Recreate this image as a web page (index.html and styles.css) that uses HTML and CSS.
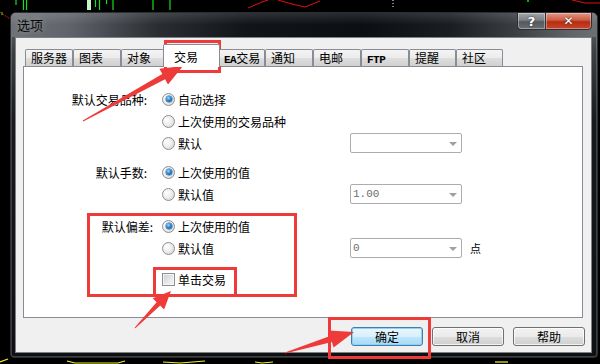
FILE: index.html
```html
<!DOCTYPE html>
<html lang="zh-CN">
<head>
<meta charset="utf-8">
<title>选项</title>
<link rel="stylesheet" href="styles.css">
</head>
<body>
<div class="desktop">
  <svg class="chart" width="600" height="364" viewBox="0 0 600 364">
    <g stroke="#18e018" stroke-width="1.2">
      <line x1="16" y1="0" x2="16" y2="5"/>
      <line x1="23.5" y1="0" x2="23.5" y2="10"/>
      <line x1="26.5" y1="0" x2="26.5" y2="10"/>
      <line x1="95.5" y1="0" x2="95.5" y2="7"/>
      <line x1="99.5" y1="0" x2="99.5" y2="10"/>
      <line x1="106.5" y1="0" x2="106.5" y2="4"/>
      <line x1="113" y1="0" x2="113" y2="10"/>
      <line x1="153" y1="0" x2="153" y2="10"/>
      <line x1="170" y1="0" x2="170" y2="10"/>
      <line x1="2" y1="12" x2="2" y2="15"/>
    </g>
    <rect x="87" y="0" width="4" height="10" fill="#c8f5c8"/>
    <circle cx="528" cy="1" r="1" fill="#18e018"/>
    <g stroke="#e01010" stroke-width="1" fill="none">
      <polyline points="0,12 10,19" stroke-dasharray="2 1"/>
      <polyline points="248,8 262,2 268,0"/>
      <polyline points="278,0 292,4 305,7 315,3 320,1"/>
      <polyline points="572,0 585,3 600,3"/>
    </g>
    <line x1="393" y1="0" x2="393" y2="8" stroke="#fff" stroke-dasharray="1 2"/>
    <g stroke="#f0f020" stroke-width="1.2" fill="none">
      <polyline points="0,362 8,359"/>
      <polyline points="67,361 75,363 118,363 125,361"/>
      <polyline points="163,362 180,363 205,361"/>
      <polyline points="255,362 262,363 273,362"/>
      <polyline points="495,362 508,362"/>
    </g>
  </svg>

  <div class="window">
    <div class="titlebar">
      <span class="title">选项</span>
      <div class="caption-buttons">
        <span class="cap-btn help">?</span>
        <span class="cap-btn close">✕</span>
      </div>
    </div>
    <div class="client">
      <div class="tabs">
        <span class="tab">服务器</span>
        <span class="tab">图表</span>
        <span class="tab tab-narrow">对象</span>
        <span class="tab tab-selected">交易</span>
        <span class="tab tab-47"><span class="latin">EA</span>交易</span>
        <span class="tab">通知</span>
        <span class="tab">电邮</span>
        <span class="tab"><span class="latin">FTP</span></span>
        <span class="tab tab-47">提醒</span>
        <span class="tab tab-47">社区</span>
      </div>
      <div class="panel">
        <div class="group">
          <div class="row">
            <span class="label">默认交易品种:</span>
            <span class="opt"><span class="radio on"></span>自动选择</span>
          </div>
          <div class="row">
            <span class="label"></span>
            <span class="opt"><span class="radio"></span>上次使用的交易品种</span>
          </div>
          <div class="row">
            <span class="label"></span>
            <span class="opt"><span class="radio"></span>默认</span>
            <span class="combo"><span class="combo-text"></span><span class="combo-arrow"></span></span>
          </div>
        </div>
        <div class="group group-lots">
          <div class="row">
            <span class="label">默认手数:</span>
            <span class="opt"><span class="radio on"></span>上次使用的值</span>
          </div>
          <div class="row">
            <span class="label"></span>
            <span class="opt"><span class="radio"></span>默认值</span>
            <span class="combo"><span class="combo-text">1.00</span><span class="combo-arrow"></span></span>
          </div>
        </div>
        <div class="group group-slip">
          <div class="row">
            <span class="label label-shift">默认偏差:</span>
            <span class="opt"><span class="radio on"></span>上次使用的值</span>
          </div>
          <div class="row">
            <span class="label"></span>
            <span class="opt"><span class="radio"></span>默认值</span>
            <span class="combo"><span class="combo-text">0</span><span class="combo-arrow"></span></span>
            <span class="suffix">点</span>
          </div>
        </div>
        <div class="group group-check">
          <div class="row">
            <span class="label"></span>
            <span class="opt"><span class="checkbox"></span>单击交易</span>
          </div>
        </div>
      </div>
      <div class="buttons">
        <span class="btn btn-default">确定</span>
        <span class="btn">取消</span>
        <span class="btn">帮助</span>
      </div>
    </div>
  </div>

  <svg class="annot" width="600" height="364" viewBox="0 0 600 364">
    <g fill="none" stroke="#ef3a3a" stroke-width="3">
      <rect x="165.5" y="41.5" width="54" height="30"/>
      <rect x="88.5" y="214.5" width="207" height="81"/>
      <rect x="154.5" y="268.5" width="81" height="27"/>
      <rect x="329.5" y="318.5" width="100" height="39"/>
    </g>
    <g fill="#ef3a3a">
      <polygon points="82.8,120.6 162.3,74.0 159.4,68.7 183,66 168.0,84.5 165.1,79.2 83.2,121.4"/>
      <polygon points="134.6,327.7 156.6,302.2 152.7,298.3 171,291 164.1,309.5 160.2,305.6 135.4,328.3"/>
      <polygon points="284.9,352.5 330.1,336.1 328.4,330.4 354,332 333.6,347.6 331.9,341.9 285.1,353.5"/>
    </g>
  </svg>
</div>
</body>
</html>
```
FILE: styles.css
```css
* { box-sizing: border-box; }

html, body {
  margin: 0;
  padding: 0;
  background: #000;
}

body {
  width: 600px;
  height: 364px;
  overflow: hidden;
  font-family: "Noto Sans CJK SC", "Noto Sans", sans-serif;
  font-size: 12px;
  color: #000;
}

.desktop {
  position: relative;
  width: 600px;
  height: 364px;
  padding: 12px 2px 0 10px;
  background: #000;
}

.chart, .annot {
  position: absolute;
  left: 0;
  top: 0;
}

.annot { pointer-events: none; }

.window {
  position: relative;
  width: 588px;
  height: 346px;
  display: flex;
  flex-direction: column;
  border: 1px solid #2b2e33;
  border-radius: 6px 6px 4px 4px;
  background: linear-gradient(180deg, #6a6e73 0, #3b3f44 40px, #17191c 110px, #0e1012 100%);
  box-shadow: inset 0 1px 0 rgba(255,255,255,0.45), inset 1px 0 0 rgba(255,255,255,0.18), inset -1px 0 0 rgba(255,255,255,0.18), inset 0 -1px 0 rgba(255,255,255,0.2);
}

.titlebar {
  height: 24px;
  display: flex;
  align-items: flex-start;
  border-radius: 5px 5px 0 0;
  background:
    linear-gradient(180deg, rgba(255,255,255,0.12) 0, rgba(255,255,255,0) 12px),
    linear-gradient(90deg, #6f7378 0, #60646a 10%, #2a2e33 25%, #11151a 40%, #0b0e13 60%, #1a1e23 75%, #3a3e43 86%, #5f6368 95%, #6c7075 100%);
}

.title {
  padding: 4px 0 0 6px;
  font-size: 13px;
  line-height: 16px;
  color: #0a0a0a;
  text-shadow: 0 0 6px rgba(255,255,255,0.35);
}

.caption-buttons {
  display: flex;
  margin: -1px 5px 0 auto;
  height: 18px;
}

.cap-btn {
  display: flex;
  align-items: center;
  justify-content: center;
  height: 18px;
  border: 1px solid #2c2f33;
  color: #fff;
  font-family: "DejaVu Sans", sans-serif;
  font-weight: bold;
  text-shadow: 0 0 2px #222;
  box-shadow: inset 0 0 0 1px rgba(255,255,255,0.35);
}

.cap-btn.help {
  width: 28px;
  font-size: 13px;
  border-right: none;
  border-radius: 0 0 0 4px;
  background: linear-gradient(180deg, #a3a7ac 0, #7c8085 45%, #55595e 55%, #6a6e73 100%);
}

.cap-btn.close {
  width: 47px;
  font-size: 12px;
  border-radius: 0 0 4px 0;
  background: linear-gradient(180deg, #e29a8a 0, #cf5a41 45%, #b42d12 55%, #c9462a 100%);
}

.client {
  flex: 1;
  margin: 0 5px 4px 4px;
  display: flex;
  flex-direction: column;
  background: #f0f0f0;
  border: 1px solid #7d8186;
}

.tabs {
  position: relative;
  z-index: 1;
  display: flex;
  align-items: flex-end;
  height: 22px;
  margin-top: 6px;
  padding-left: 9px;
}

.tab {
  width: 48px;
  height: 17px;
  padding-left: 5px;
  border: 1px solid #898c95;
  border-bottom: none;
  border-radius: 2px 2px 0 0;
  line-height: 15px;
  white-space: nowrap;
  background: linear-gradient(180deg, #f4f4f4 0, #ebebeb 50%, #dedede 51%, #d0d0d0 100%);
}

.tab-narrow { width: 44px; }
.tab-47 { width: 47px; }

.tab-selected {
  position: relative;
  z-index: 2;
  width: 57px;
  height: 23px;
  margin: 0 -2px -1px -2px;
  padding: 4px 0 0 10px;
  background: #fff;
}

.latin {
  font-family: "Liberation Mono", monospace;
  font-weight: bold;
  font-size: 11px;
  letter-spacing: -0.5px;
}

.panel {
  height: 252px;
  margin: 0 8px 0 7px;
  padding-top: 21px;
  border: 1px solid #898c95;
  background: #fff;
}

.group-lots { margin-top: 7px; }
.group-slip { margin-top: 10px; }
.group-check { margin-top: 9px; }

.row {
  display: flex;
  align-items: center;
  height: 22px;
}

.label {
  width: 124px;
  padding-right: 1px;
  text-align: right;
  white-space: nowrap;
}

.label-shift { width: 129px; padding-right: 0; }

.opt {
  display: flex;
  align-items: center;
  width: 202px;
  padding-left: 14px;
  white-space: nowrap;
}

.label-shift + .opt { width: 197px; padding-left: 9px; }

.radio {
  position: relative;
  flex: none;
  width: 13px;
  height: 13px;
  margin-right: 3px;
  border: 1px solid #8e8f8f;
  border-radius: 50%;
  background: radial-gradient(circle at 35% 35%, #ffffff 0, #eeeeee 45%, #cfcfcf 100%);
}

.radio.on::after {
  content: "";
  position: absolute;
  left: 2.5px;
  top: 2.5px;
  width: 6px;
  height: 6px;
  border-radius: 50%;
  background: radial-gradient(circle at 40% 35%, #a6dcfa 0, #2a84cf 45%, #0c4a8c 100%);
  box-shadow: 0 0 0 0.5px #1b5d9c;
}

.checkbox {
  flex: none;
  width: 13px;
  height: 13px;
  margin-right: 3px;
  border: 1px solid #8e8f8f;
  background: linear-gradient(135deg, #c8ccd2 0, #e4e6e9 50%, #f7f7f7 100%);
  box-shadow: inset 0 0 0 1px #f4f4f4;
}

.combo {
  display: flex;
  align-items: center;
  width: 112px;
  height: 20px;
  padding: 0 4px 0 2px;
  border: 1px solid #acacac;
  border-radius: 2px;
  background: #fff;
}

.combo-text {
  flex: 1;
  font-family: "Liberation Mono", monospace;
  font-size: 11px;
  color: #6d6d6d;
}

.combo-arrow {
  width: 0;
  height: 0;
  border-left: 4px solid transparent;
  border-right: 4px solid transparent;
  border-top: 4px solid #a0a0a0;
  margin-top: 2px;
}

.suffix {
  margin-left: 8px;
  font-size: 11px;
}

.buttons {
  display: flex;
  justify-content: flex-end;
  gap: 9px;
  padding: 9px 6px 0 0;
}

.btn {
  width: 72px;
  height: 19px;
  border: 1px solid #707070;
  border-radius: 3px;
  text-align: center;
  line-height: 17px;
  background: linear-gradient(180deg, #f2f2f2 0, #ebebeb 50%, #dddddd 51%, #cfcfcf 100%);
  box-shadow: inset 0 0 0 1px rgba(255,255,255,0.75);
}

.btn-default {
  border-color: #3c7fb1;
  background: linear-gradient(180deg, #eaf6fd 0, #d9f0fc 50%, #bee6fd 51%, #a7d9f5 100%);
  box-shadow: inset 0 0 0 1px #8fd0f3;
}
```
